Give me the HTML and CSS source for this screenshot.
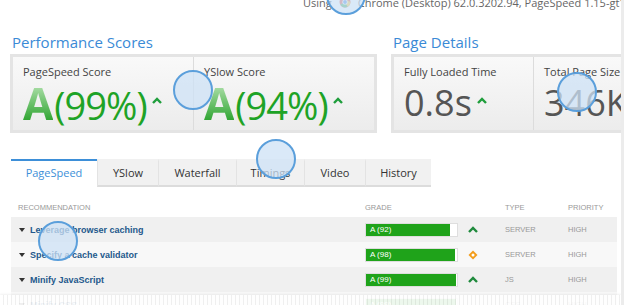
FILE: index.html
```html
<!DOCTYPE html>
<html lang="en">
<head>
    <meta charset="UTF-8">
    <title>GTmetrix Report</title>
    <link rel="stylesheet" href="styles.css">
</head>
<body>
    <div class="topline">
        <span>Using</span>
        <svg class="browser-icon" width="12" height="12" viewBox="0 0 12 12">
            <circle cx="6" cy="6" r="5.5" fill="#e0453a"/>
            <path d="M6 6 L1.2 8.8 A5.5 5.5 0 0 0 8.7 10.8 Z" fill="#2fa44f"/>
            <path d="M6 6 L8.7 10.8 A5.5 5.5 0 0 0 11.5 6 L6 3.3 Z" fill="#f6c028"/>
            <circle cx="6" cy="6" r="2.6" fill="#fff"/>
            <circle cx="6" cy="6" r="1.9" fill="#3b7ddd"/>
        </svg>
        <span>Chrome (Desktop) 62.0.3202.94, PageSpeed 1.15-gt1, YSlow 3.1.8</span>
    </div>

    <div class="sections">
        <section class="scores">
            <h2>Performance Scores</h2>
            <div class="box">
                <div class="cell">
                    <div class="label">PageSpeed Score</div>
                    <div class="value">
                        <span class="grade">A</span>
                        <span class="pct">(99%)</span>
                        <svg class="caret" width="10" height="7" viewBox="0 0 10 7"><polyline points="1,6 5,2 9,6" fill="none" stroke="#1f9e3c" stroke-width="2.4"/></svg>
                    </div>
                </div>
                <div class="cell">
                    <div class="label">YSlow Score</div>
                    <div class="value">
                        <span class="grade">A</span>
                        <span class="pct">(94%)</span>
                        <svg class="caret" width="10" height="7" viewBox="0 0 10 7"><polyline points="1,6 5,2 9,6" fill="none" stroke="#1f9e3c" stroke-width="2.4"/></svg>
                    </div>
                </div>
            </div>
        </section>

        <section class="details">
            <h2>Page Details</h2>
            <div class="box">
                <div class="cell narrow">
                    <div class="label">Fully Loaded Time</div>
                    <div class="value">
                        <span class="metric">0.8s</span>
                        <svg class="caret" width="10" height="7" viewBox="0 0 10 7"><polyline points="1,6 5,2 9,6" fill="none" stroke="#1f9e3c" stroke-width="2.4"/></svg>
                    </div>
                </div>
                <div class="cell">
                    <div class="label">Total Page Size</div>
                    <div class="value">
                        <span class="metric">346KB</span>
                    </div>
                </div>
            </div>
        </section>
    </div>

    <div class="tabs">
        <div class="tab active w-ps">PageSpeed</div>
        <div class="tab w-ys">YSlow</div>
        <div class="tab w-wf">Waterfall</div>
        <div class="tab w-tm">Timings</div>
        <div class="tab w-vd">Video</div>
        <div class="tab w-hs">History</div>
    </div>

    <div class="table">
        <div class="row head">
            <div class="rec">Recommendation</div>
            <div>Grade</div>
            <div></div>
            <div>Type</div>
            <div>Priority</div>
        </div>
        <div class="row odd">
            <div class="rec"><span class="tri"></span><a>Leverage browser caching</a></div>
            <div class="bar"><div class="fill" style="width: 92%">A (92)</div></div>
            <div><svg width="10" height="7" viewBox="0 0 10 7"><polyline points="1,6 5,2 9,6" fill="none" stroke="#1f8a3c" stroke-width="2.4"/></svg></div>
            <div class="meta">SERVER</div>
            <div class="meta">HIGH</div>
        </div>
        <div class="row even">
            <div class="rec"><span class="tri"></span><a>Specify a cache validator</a></div>
            <div class="bar"><div class="fill" style="width: 98%">A (98)</div></div>
            <div><svg width="10" height="10" viewBox="0 0 10 10"><path d="M5 0.5 L9.5 5 L5 9.5 L0.5 5 Z" fill="#f39c1a"/><circle cx="5" cy="5" r="1.5" fill="#fff"/></svg></div>
            <div class="meta">SERVER</div>
            <div class="meta">HIGH</div>
        </div>
        <div class="row odd">
            <div class="rec"><span class="tri"></span><a>Minify JavaScript</a></div>
            <div class="bar"><div class="fill" style="width: 99%">A (99)</div></div>
            <div><svg width="10" height="7" viewBox="0 0 10 7"><polyline points="1,6 5,2 9,6" fill="none" stroke="#1f8a3c" stroke-width="2.4"/></svg></div>
            <div class="meta">JS</div>
            <div class="meta">HIGH</div>
        </div>
        <div class="row even">
            <div class="rec"><span class="tri"></span><a>Minify CSS</a></div>
            <div class="bar"><div class="fill" style="width: 99%">A (99)</div></div>
            <div></div>
            <div class="meta">CSS</div>
            <div class="meta">HIGH</div>
        </div>
    </div>

    <div class="fade"></div>

    <div class="touch t1"></div>
    <div class="touch t2"></div>
    <div class="touch t3"></div>
    <div class="touch t4"></div>
    <div class="touch t5"></div>
</body>
</html>
```

FILE: styles.css
```css
body {
    margin: 0;
    width: 624px;
    height: 305px;
    overflow: hidden;
    position: relative;
    box-sizing: border-box;
    border-right: 3px solid #ececec;
    background: #fff;
    color: #333;
    font-family: "Open Sans", sans-serif;
}

/* test info line, cut off at the top */
.topline {
    display: flex;
    align-items: center;
    gap: 5px;
    margin-top: -6px;
    padding-left: 303px;
    height: 16px;
    font-size: 11px;
    color: #666;
    white-space: nowrap;
}

.browser-icon {
    flex: none;
    margin: 0 2px;
}

.sections {
    display: flex;
    gap: 14px;
    margin-top: 22px;
    padding-left: 10px;
}

h2 {
    margin: 0 0 2px 2px;
    font-size: 15px;
    font-weight: 400;
    line-height: 20px;
    color: #3a8ad6;
}

.scores {
    width: 367px;
    flex: none;
}

.details {
    width: 330px;
    flex: none;
}

.box {
    display: flex;
    height: 73px;
    border: 3px solid #e4e4e4;
}

.cell {
    flex: 1;
    padding: 8px 0 0 10px;
    background: linear-gradient(#f9f9f9, #ececec);
    border-left: 1px solid #dcdcdc;
}

.cell:first-child {
    border-left: none;
}

.cell.narrow {
    flex: none;
    width: 129px;
}

.label {
    font-size: 11px;
    line-height: 14px;
    color: #444;
}

.value {
    display: flex;
    align-items: baseline;
    margin-top: 4px;
    height: 40px;
    white-space: nowrap;
}

.grade {
    font-size: 44px;
    line-height: 40px;
    font-weight: 700;
    background: linear-gradient(#b4e2b0, #27a12a);
    -webkit-background-clip: text;
    background-clip: text;
    color: transparent;
    margin-right: 1px;
}

.pct {
    font-size: 38px;
    line-height: 40px;
    letter-spacing: -1px;
    color: #1ea326;
}

.metric {
    font-size: 36px;
    line-height: 40px;
    color: #555;
}

.caret {
    align-self: flex-start;
    margin: 14px 0 0 5px;
}

/* tabs */
.tabs {
    display: flex;
    margin: 26px 0 0 11px;
}

.tab {
    box-sizing: border-box;
    height: 28px;
    line-height: 24px;
    text-align: center;
    font-size: 11px;
    color: #333;
    background: #f1f1f1;
    border-top: 2px solid #f1f1f1;
    border-left: 1px solid #e3e3e3;
    border-bottom: 2px solid #dcdcdc;
}

.tab.active {
    background: #fff;
    color: #3d8fd8;
    border-top-color: #3d8fd8;
    border-left: none;
    border-bottom-color: #fff;
}

.w-ps { width: 86px; }
.w-ys { width: 61px; }
.w-wf { width: 78px; }
.w-tm { width: 68px; }
.w-vd { width: 61px; }
.w-hs { width: 66px; }

/* recommendations table */
.table {
    margin: 10px 4px 0 11px;
    font-family: "Liberation Sans", Arial, sans-serif;
}

.row {
    display: grid;
    grid-template-columns: 354px 100px 40px 63px 1fr;
    align-items: center;
    height: 25px;
}

.row.head {
    height: 20px;
    font-size: 7.5px;
    text-transform: uppercase;
    color: #999;
}

.row.odd {
    background: #f0f0f0;
}

.row.even {
    background: #f8f8f8;
}

.rec {
    display: flex;
    align-items: center;
    padding-left: 7px;
}

.tri {
    width: 0;
    height: 0;
    border-left: 3px solid transparent;
    border-right: 3px solid transparent;
    border-top: 4px solid #333;
    margin: 0 5px 0 1px;
}

.rec a {
    font-size: 9px;
    font-weight: 700;
    color: #24588c;
}

.bar {
    box-sizing: border-box;
    width: 93px;
    height: 14px;
    background: #fff;
    border: 1px solid #dedede;
}

.fill {
    height: 100%;
    box-sizing: border-box;
    padding-left: 4px;
    background: #1fa31a;
    color: #fff;
    font-size: 8px;
    line-height: 12px;
}

.row svg {
    display: block;
    margin-left: 3px;
}

.meta {
    font-size: 7.5px;
    color: #999;
}

.fade {
    position: absolute;
    left: 0;
    right: 0;
    top: 295px;
    height: 10px;
    background: repeating-linear-gradient(90deg, rgba(255, 255, 255, 0.92) 0 3px, rgba(238, 238, 238, 0.92) 3px 4px);
    box-shadow: 0 -1px 2px rgba(0, 0, 0, 0.06);
}

/* touch markers over the screenshot */
.touch {
    position: absolute;
    width: 40px;
    height: 40px;
    box-sizing: border-box;
    border-radius: 50%;
    border: 2.5px solid #5b9fdb;
    background: rgba(205, 226, 245, 0.75);
}

.t1 { left: 173px; top: 70px; }
.t2 { left: 557px; top: 72px; }
.t3 { left: 256px; top: 139px; }
.t4 { left: 38px; top: 221px; }
.t5 { left: 326px; top: -25px; }
```
